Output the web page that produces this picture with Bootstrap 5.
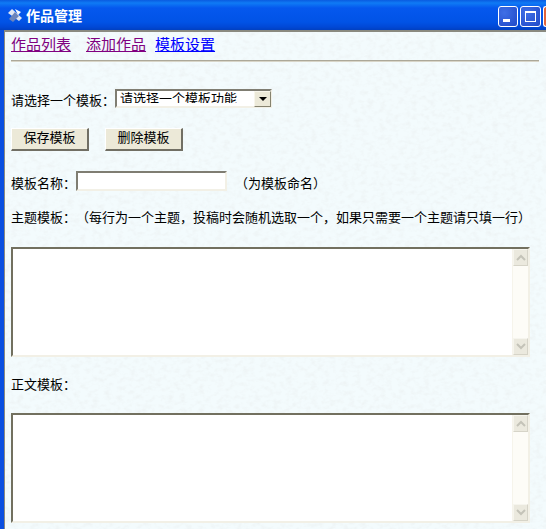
<!DOCTYPE html>
<html lang="zh-CN">
<head>
  <meta charset="UTF-8" />
  <meta name="viewport" content="width=device-width, initial-scale=1.0" />
  <title>作品管理</title>
  <link href="https://cdn.jsdelivr.net/npm/bootstrap@5.3.3/dist/css/bootstrap.min.css" rel="stylesheet" />
  <style>
    html, body { height: 529px; overflow: hidden; background: #eef7fa; }
    body { font-family: "Liberation Sans", "Noto Sans CJK SC", sans-serif; font-size: 13px; color: #000; text-spacing-trim: space-all; }
    .win-title {
      height: 30px; padding: 6px 0 4px 7px; color: #fff; font-weight: 700; font-size: 14px; line-height: 20px;
      background: linear-gradient(#0a5be0 0, #0f7bf5 3px, #0558ee 8px, #0153e6 22px, #0148d6 27px, #0140c0 30px);
    }
    .win-btn { width: 21px; height: 21px; border: 1px solid #fff; border-radius: 3px; background: radial-gradient(circle at 30% 30%, #3f6fe6, #2049c8); }
    .win-btn svg { display: block; }
    .win-min { width: 20px; margin-right: 2px; }
    .win-close { width: 3px; margin-left: 2px; height: 21px; background: #e0643c; border: 1px solid #fff; border-right: 0; border-radius: 3px 0 0 3px; }
    .win-body { height: 499px; border-left: 4px solid #0a4fe0; position: relative; overflow: hidden; background: #eef7fa; }
    .win-inner { position: relative; height: 100%; border-left: 1px solid #8b8b80; border-top: 2px solid #8a8a80; padding: 1px 0 0 6px; }
    .paper { position: absolute; left: 0; top: 0; width: 100%; height: 100%; }
    .top-links { position: relative; font-size: 15px; line-height: 24px; height: 24px; }
    .top-links a { color: #00f; }
    .top-links a.seen { color: #800080; }
    .rule { position: relative; height: 2px; width: 528px; margin: 3px 0 0; background: #aca899; border-bottom: 1px solid #d8d5c8; }
    .line-row { position: relative; line-height: 20px; }
    .field-row { height: 20px; }
    .low-label { padding-top: 2px; }
    .name-row .low-label { padding-top: 3px; }
    .sel-box { position: relative; width: 157px; height: 19px; }
    .sel-box select { appearance: none; display: block; width: 100%; height: 100%; padding: 0 0 3px 3px; font: inherit; line-height: 15px; color: #000; background: #fff; border: 2px solid; border-color: #7f7d72 #f2f0e6 #f2f0e6 #7f7d72; border-radius: 0; }
    .sel-arrow { position: absolute; right: 1px; top: 2px; width: 17px; height: 16px; background: #ece9d8; border: 1px solid; border-color: #f8f6ec #86836f #86836f #f8f6ec; }
    .sel-arrow svg { display: block; margin: 0 auto; }
    .old-btn { width: 78px; height: 23px; padding: 0 0 2px; font-size: 13px; line-height: 18px; color: #000; background: #ece9d8; border: 1px solid; border-color: #fff #716f64 #716f64 #fff; border-width: 1px 2px 2px 1px; border-radius: 0; }
    .name-field { width: 151px; height: 20px; padding: 0 2px; background: #fff; border: 2px solid; border-color: #7f7d72 #f2f0e6 #f2f0e6 #7f7d72; border-radius: 0; }
    .area-box { position: relative; width: 519px; height: 110px; background: #fff; border: 2px solid; border-color: #72705f #f2f0e6 #f2f0e6 #72705f; }
    .area-box textarea { flex: 1; border: 0; outline: 0; resize: none; background: #fff; }
    .sbar { width: 16px; background: #fdfcf7; border-left: 1px solid #f6f4eb; }
    .sbar-btn { height: 17px; background: #ebe9de; border: 1px solid; border-color: #f6f5ee #d6d4c8 #d6d4c8 #f6f5ee; }
    .sbar-btn svg { display: block; margin: 4px auto 0; }
  </style>
</head>
<body>
  <div class="win-title d-flex align-items-center">
    <svg width="16" height="16" viewBox="0 0 16 16" class="flex-shrink-0" style="margin-right:3px">
      <path d="M1 5 L5 1 L15 10 L12 13 Z" fill="#dfe6f4" />
      <path d="M2 11 L8 4 L12 8 L6 14 Z" fill="#6c84bb" />
      <path d="M8 1 L14 4 L11 7 Z" fill="#f7f9fd" />
    </svg>
    <span>作品管理</span>
    <div class="ms-auto d-flex flex-shrink-0">
      <div class="win-btn win-min">
        <svg width="18" height="19" viewBox="0 0 18 19"><rect x="4" y="12" width="7" height="3" fill="#fff" /></svg>
      </div>
      <div class="win-btn">
        <svg width="19" height="19" viewBox="0 0 19 19"><rect x="4.5" y="4.5" width="10" height="10" fill="none" stroke="#fff" /><rect x="4" y="4" width="11" height="2" fill="#fff" /></svg>
      </div>
      <div class="win-close"></div>
    </div>
  </div>
  <div class="win-body">
    <div class="win-inner">
      <svg class="paper" aria-hidden="true">
        <filter id="grain" x="0" y="0" width="100%" height="100%"><feTurbulence type="fractalNoise" baseFrequency="0.16 0.22" numOctaves="3" seed="4" /><feColorMatrix values="0 0 0 0 0.85  0 0 0 0 0.9  0 0 0 0 0.91  2.2 0 0 0 -0.95" /></filter>
        <rect width="100%" height="100%" fill="#f3fbfd" />
        <rect width="100%" height="100%" filter="url(#grain)" />
      </svg>
      <div class="top-links">
        <a class="seen" href="#">作品列表</a><a class="seen" href="#" style="margin-left:15px">添加作品</a><a href="#" style="margin-left:9px">模板设置</a>
      </div>
      <div class="rule"></div>
      <div class="line-row field-row d-flex align-items-start" style="margin-top:27px">
        <span class="low-label">请选择一个模板：</span>
        <div class="sel-box">
          <select><option>请选择一个模板功能</option></select>
          <div class="sel-arrow"><svg width="14" height="14" viewBox="0 0 14 14"><path d="M3 5 H11 L7 9 Z" fill="#000" /></svg></div>
        </div>
      </div>
      <div class="line-row d-flex" style="margin-top:19px; gap:16px">
        <button class="old-btn" type="button">保存模板</button>
        <button class="old-btn" type="button">删除模板</button>
      </div>
      <div class="line-row field-row name-row d-flex align-items-start" style="margin-top:20px">
        <span class="low-label">模板名称：</span>
        <input class="name-field" type="text" />
        <span class="ms-2 low-label">（为模板命名）</span>
      </div>
      <div class="line-row" style="margin-top:17px">主题模板：（每行为一个主题，投稿时会随机选取一个，如果只需要一个主题请只填一行）</div>
      <div class="area-box d-flex" style="margin-top:19px">
        <textarea></textarea>
        <div class="sbar d-flex flex-column justify-content-between">
          <div class="sbar-btn"><svg width="10" height="7" viewBox="0 0 10 7"><path d="M1 6 L5 2 L9 6" fill="none" stroke="#c4c3b8" stroke-width="2" /></svg></div>
          <div class="sbar-btn"><svg width="10" height="7" viewBox="0 0 10 7"><path d="M1 1 L5 5 L9 1" fill="none" stroke="#c4c3b8" stroke-width="2" /></svg></div>
        </div>
      </div>
      <div class="line-row" style="margin-top:18px">正文模板：</div>
      <div class="area-box d-flex" style="margin-top:18px">
        <textarea></textarea>
        <div class="sbar d-flex flex-column justify-content-between">
          <div class="sbar-btn"><svg width="10" height="7" viewBox="0 0 10 7"><path d="M1 6 L5 2 L9 6" fill="none" stroke="#c4c3b8" stroke-width="2" /></svg></div>
          <div class="sbar-btn"><svg width="10" height="7" viewBox="0 0 10 7"><path d="M1 1 L5 5 L9 1" fill="none" stroke="#c4c3b8" stroke-width="2" /></svg></div>
        </div>
      </div>
    </div>
  </div>
  <script src="https://cdn.jsdelivr.net/npm/bootstrap@5.3.3/dist/js/bootstrap.bundle.min.js"></script>
</body>
</html>
